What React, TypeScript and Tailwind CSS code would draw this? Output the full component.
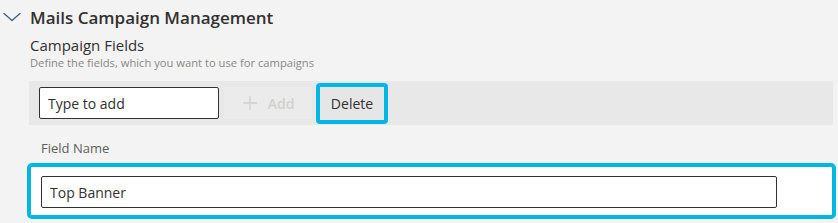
import React from 'react'

const font = { fontFamily: '"Segoe UI", "Open Sans", "Noto Sans", sans-serif' }

function Chevron() {
  return (
    <svg width="18" height="10" viewBox="0 0 18 10" fill="none">
      <path d="M1 1.5l8 7 8-7" stroke="#3d5f80" strokeWidth="1.3" strokeLinecap="round" strokeLinejoin="round" />
    </svg>
  )
}

export default function App() {
  return (
    <div className="w-[838px] h-[223px] bg-[#f3f3f3] overflow-hidden text-[#323130]" style={font}>
      {/* Section header */}
      <div className="flex items-center h-[32px] pt-[2px]">
        <div className="w-[28px] flex justify-center pr-[4px]">
          <Chevron />
        </div>
        <h2 className="ml-[2px] text-[17px] font-semibold leading-none text-[#323130]">Mails Campaign Management</h2>
      </div>

      <div className="pl-[30px] pt-[3px]">
        <div className="text-[15px] leading-[20px] text-[#323130]">Campaign Fields</div>
        <div className="text-[11.2px] leading-[16px] text-[#8a8886]">Define the fields, which you want to use for campaigns</div>
      </div>

      {/* Toolbar */}
      <div className="ml-[29px] mr-[5px] mt-[10px] h-[44px] bg-[#e8e8e8] flex items-center pl-[10px]">
        <input
          readOnly
          value="Type to add"
          className="w-[180px] h-[32px] bg-white border border-[#323130] rounded-[2px] px-[8px] text-[14px] text-[#323130] outline-none"
          style={font}
        />
        <button className="ml-[5px] w-[88px] h-[32px] bg-[#ebebeb] flex items-center justify-center gap-[10px] text-[14px] font-semibold text-[#d2d0ce]">
          <svg width="16" height="16" viewBox="0 0 16 16" fill="none">
            <path d="M8 1v14M1 8h14" stroke="#cfcfcf" strokeWidth="1.3" />
          </svg>
          Add
        </button>
        <button className="ml-[4px] w-[72px] h-[41px] rounded-[4px] border-[4px] border-[#00b7e4] bg-[#e6e6e6] flex items-center justify-center text-[14px] text-[#323130]">
          Delete
        </button>
      </div>

      {/* Field list */}
      <div className="pl-[41px] pt-[14px] text-[13px] leading-[18px] text-[#605e5c]">Field Name</div>
      <div className="ml-[27px] mr-[2px] mt-[6px] h-[56px] bg-white border-[4px] border-[#00b7e4] rounded-[5px] pl-[10px] pt-[9px]">
        <input
          readOnly
          value="Top Banner"
          className="w-[736px] h-[32px] bg-white border border-[#323130] rounded-[2px] px-[8px] text-[14px] text-[#323130] outline-none"
          style={font}
        />
      </div>
    </div>
  )
}
